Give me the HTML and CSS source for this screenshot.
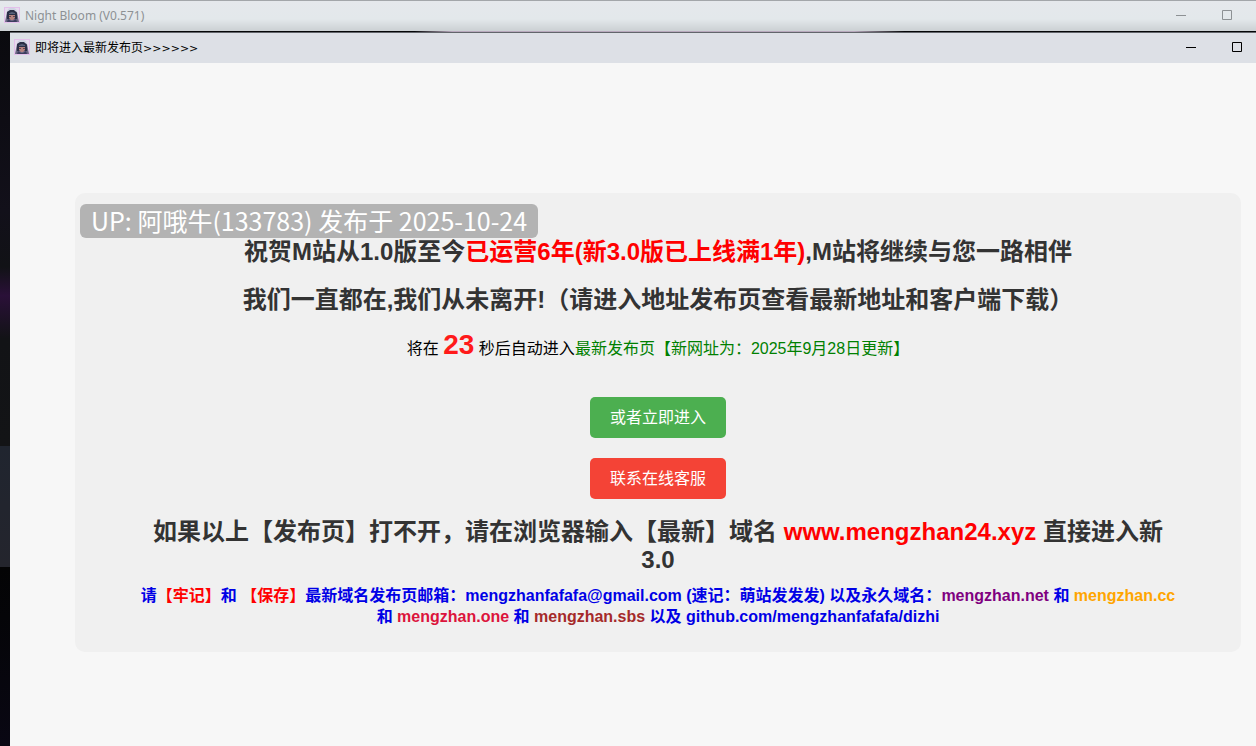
FILE: index.html
```html
<!DOCTYPE html>
<html lang="zh-CN">
<head>
<meta charset="utf-8">
<title>Night Bloom</title>
<link rel="stylesheet" href="styles.css">
</head>
<body>
<svg class="defs" width="0" height="0" aria-hidden="true">
  <symbol id="avatar" viewBox="0 0 16 16">
    <rect x=".5" y=".5" width="15" height="15" fill="#e6dcee" stroke="#e3c0ea"/>
    <path d="M1 15 2 10 3 5 5 3 11 3 13 5 14 10 15 15Z" fill="#6c6684"/>
    <path d="M3 5 4 2 6 1 10 1 12 2 13 5 10 4 6 4Z" fill="#cfd3e2"/>
    <path d="M3 5 6 3 10 3 13 6 13 12 3 12Z" fill="#2b3047"/>
    <path d="M5 6 8 5 11 6 11 7 5 7Z" fill="#59617b"/>
    <path d="M5 8 11 8 11 11 9 13 7 13 5 11Z" fill="#b5827f"/>
    <path d="M5 9.500H7M9 9.500H11" stroke="#5f4552"/>
    <path d="M3 15 4 12 7 14 9 14 12 12 13 15Z" fill="#3c3d5e"/>
  </symbol>
</svg>
<div class="desktop">
  <header class="titlebar titlebar-back">
    <svg class="avatar"><use href="#avatar"/></svg>
    <span class="title">Night Bloom (V0.571)</span>
    <button class="control" aria-label="最小化"><svg viewBox="0 0 10 10"><path d="M0 5.5H10"/></svg></button>
    <button class="control" aria-label="最大化"><svg viewBox="0 0 10 10"><path d="M.5.5H9.5V9.5H.5Z"/></svg></button>
  </header>
  <div class="workspace">
    <section class="window">
      <header class="titlebar titlebar-front">
        <svg class="avatar"><use href="#avatar"/></svg>
        <span class="title">即将进入最新发布页<span class="arrows">&gt;&gt;&gt;&gt;&gt;&gt;</span></span>
        <button class="control" aria-label="最小化"><svg viewBox="0 0 10 10"><path d="M0 5.5H10"/></svg></button>
        <button class="control" aria-label="最大化"><svg viewBox="0 0 10 10"><path d="M.5.5H9.5V9.5H.5Z"/></svg></button>
      </header>
      <main class="page">
        <div class="card">
          <div class="watermark">UP: 阿哦牛(133783) 发布于 2025-10-24</div>
          <h2 class="heading">祝贺M站从1.0版至今<span class="red">已运营6年(新3.0版已上线满1年)</span>,M站将继续与您一路相伴</h2>
          <h2 class="heading">我们一直都在,我们从未离开!（请进入地址发布页查看最新地址和客户端下载）</h2>
          <p class="countdown">将在 <span class="seconds">23</span> 秒后自动进入<span class="green">最新发布页【新网址为：2025年9月28日更新】</span></p>
          <div class="actions">
            <button class="button enter">或者立即进入</button>
            <button class="button support">联系在线客服</button>
          </div>
          <h2 class="heading">如果以上【发布页】打不开，请在浏览器输入【最新】域名 <span class="red">www.mengzhan24.xyz</span> 直接进入新3.0</h2>
          <p class="contacts">请<span class="red">【牢记】</span>和 <span class="red">【保存】</span>最新域名发布页邮箱：mengzhanfafafa@gmail.com (速记：萌站发发发) 以及永久域名：<span class="purple">mengzhan.net</span> 和 <span class="orange">mengzhan.cc</span> 和 <span class="crimson">mengzhan.one</span> 和 <span class="brown">mengzhan.sbs</span> 以及 github.com/mengzhanfafafa/dizhi</p>
        </div>
      </main>
    </section>
  </div>
</div>
</body>
</html>
```
FILE: styles.css
```css
* { box-sizing: border-box; }
body {
  margin: 0;
  font-family: "Liberation Sans", "Noto Sans CJK SC", sans-serif;
  font-size: 16px;
  color: #000;
}
.defs { position: absolute; }
.desktop { min-height: 100vh; display: flex; flex-direction: column; overflow: hidden; }
.titlebar {
  display: flex;
  align-items: center;
  font-family: "Noto Sans", "Noto Sans CJK SC", sans-serif;
  font-size: 12px;
  line-height: 16px;
}
.titlebar-back {
  height: 31px;
  padding: 0 24px 2px 4px;
  border-top: 1px solid #a3a6aa;
  color: #8d9194;
  background: linear-gradient(#e5e8ec, #e3e8eb 60%, #cbd0d3);
}
.titlebar-front {
  height: 31px;
  padding: 0 14px 2px 4px;
  border-top: 1px solid #62656b;
  color: #000;
  background: #dde0e6;
  font-family: "Noto Sans CJK SC", sans-serif;
}
.avatar { width: 16px; height: 16px; margin-right: 5px; flex: none; }
.title { flex: 1; padding-top: 2px; }
.arrows { font-family: "DejaVu Sans", sans-serif; font-size: 11px; }
.control {
  width: 10px;
  height: 10px;
  margin-left: 36px;
  padding: 0;
  border: 0;
  background: none;
  color: inherit;
}
.control svg { display: block; width: 10px; height: 10px; fill: none; stroke: currentColor; }
.workspace {
  flex: 1;
  display: flex;
  padding: 1px 0 0 10px;
  background:
    linear-gradient(90deg, #050608 33%, #b8a9bd 36%, #b8a9bd 68%, #050608 72%) top / 100% 1px no-repeat,
    linear-gradient(#0a0a0e, #12101a 25%, #111216 33%, #2a1038 37%, #121316 43%, #131416 58%, #20252f 58%, #24252d 75%, #040405 75%, #050508 82%, #090713);
}
.window { flex: 1; display: flex; flex-direction: column; background: #f7f7f7; }
.page { padding: 130px 15px 0 65px; }
.card {
  position: relative;
  padding: 45px 64px 25px;
  border-radius: 10px;
  background: #f0f0f0;
  text-align: center;
}
.watermark {
  position: absolute;
  top: 11px;
  left: 5px;
  padding: 0 11px 2px;
  border-radius: 6px;
  background: #b3b3b3;
  color: #fff;
  font-family: "Noto Sans CJK SC", sans-serif;
  font-size: 25px;
  line-height: 32px;
  white-space: nowrap;
}
.heading { margin: 0 0 20px; font-size: 24px; line-height: 28px; color: #333; }
.countdown { margin: 0; line-height: 22px; }
.seconds { font-size: 28px; font-weight: bold; color: #ff1a1a; }
.actions { display: flex; flex-direction: column; align-items: center; gap: 20px; margin: 37px 0 19px; }
.button {
  padding: 1px 20px 0;
  border: 0;
  border-radius: 5px;
  color: #fff;
  font: inherit;
  line-height: 40px;
}
.enter { background: #4caf50; }
.support { background: #f44336; }
.contacts { margin: -9px 0 0; font-weight: bold; line-height: 21px; color: #0000e6; }
.red { color: #f00; }
.green { color: green; }
.purple { color: purple; }
.orange { color: orange; }
.crimson { color: crimson; }
.brown { color: brown; }
```
